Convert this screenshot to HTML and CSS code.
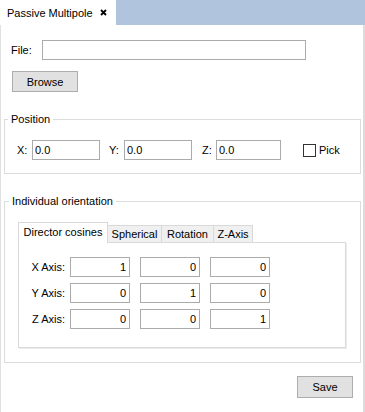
FILE: index.html
```html
<!DOCTYPE html>
<html>
<head>
<meta charset="utf-8">
<link rel="stylesheet" href="styles.css">
</head>
<body>
<div class="window">
  <div class="tabbar">
    <div class="doc-tab">
      <span class="doc-title">Passive Multipole</span>
      <svg class="close" width="7" height="7" viewBox="0 0 7 7"><path d="M1 1L6 6M6 1L1 6" stroke="#000" stroke-width="1.8"/></svg>
    </div>
  </div>
  <div class="panel">
    <div class="file-row">
      <label class="file-label">File:</label>
      <input class="text file-input" type="text" value="">
    </div>
    <button class="btn browse">Browse</button>

    <fieldset class="group pos-group">
      <legend>Position</legend>
      <div class="pos-row">
        <label class="axis">X:</label><input class="text pos" type="text" value="0.0">
        <label class="axis axis-y">Y:</label><input class="text pos" type="text" value="0.0">
        <label class="axis axis-z">Z:</label><input class="text pos pos-z" type="text" value="0.0">
        <input class="check" type="checkbox"><span class="pick">Pick</span>
      </div>
    </fieldset>

    <fieldset class="group orient-group">
      <legend>Individual orientation</legend>
      <div class="tabs">
        <div class="tab active t1">Director cosines</div>
        <div class="tab t2">Spherical</div>
        <div class="tab t3">Rotation</div>
        <div class="tab t4">Z-Axis</div>
      </div>
      <div class="pane">
        <div class="mrow"><span class="mlabel">X Axis:</span><input class="text num" value="1"><input class="text num" value="0"><input class="text num" value="0"></div>
        <div class="mrow"><span class="mlabel">Y Axis:</span><input class="text num" value="0"><input class="text num" value="1"><input class="text num" value="0"></div>
        <div class="mrow"><span class="mlabel">Z Axis:</span><input class="text num" value="0"><input class="text num" value="0"><input class="text num" value="1"></div>
      </div>
    </fieldset>

    <div class="footer">
      <button class="btn save">Save</button>
    </div>
  </div>
</div>
</body>
</html>
```

FILE: styles.css
```css
* { box-sizing: border-box; }
html, body { margin: 0; padding: 0; background: #fff; }
body {
  font-family: "Liberation Sans", Arial, sans-serif;
  font-size: 11px;
  line-height: 14px;
  color: #000;
}
.window {
  width: 365px;
  height: 412px;
  display: flex;
  flex-direction: column;
}
.tabbar {
  height: 25px;
  background: #b0c4de;
  display: flex;
  flex: none;
}
.doc-tab {
  width: 116px;
  height: 25px;
  background: #fff;
  display: flex;
  align-items: center;
  padding-left: 7px;
}
.doc-title { margin-right: 7px; }
.close { display: block; }
.panel {
  flex: 1;
  border-left: 1px solid #e0e0e0;
  border-right: 2px solid #dcdcdc;
  padding: 15px 3px 0 3px;
  display: flex;
  flex-direction: column;
  align-items: flex-start;
}
.file-row {
  display: flex;
  align-items: center;
  margin-left: 7px;
}
.file-label { width: 31px; }
.text {
  font: inherit;
  color: #000;
  height: 20px;
  border: 1px solid #ababab;
  background: #fff;
  padding: 0 2px;
  margin: 0;
  outline: none;
}
.file-input { width: 264px; }
.btn {
  font: inherit;
  color: #000;
  background: #e1e1e1;
  border: 1px solid #adadad;
  padding: 0;
  margin: 0;
}
.browse {
  width: 66px;
  height: 21px;
  margin-top: 11px;
  margin-left: 8px;
}
.group {
  margin: 0;
  border: 1px solid #dcdcdc;
  min-width: 0;
  width: 357px;
}
.group legend {
  padding: 0 3px;
  margin-left: -9px;
  line-height: 14px;
}
.pos-group {
  margin-top: 20px;
  padding: 14px 12px 13px 12px;
}
.pos-row {
  display: flex;
  align-items: center;
}
.axis { width: 15px; flex: none; }
.axis-y { margin-left: 9px; }
.axis-z { margin-left: 10px; width: 14px; }
.pos { width: 68px; flex: none; }
.pos-z { width: 65px; }
.check {
  appearance: none;
  -webkit-appearance: none;
  width: 13px;
  height: 13px;
  border: 1px solid #333;
  background: #fff;
  margin: 0 3px 0 22px;
  flex: none;
}
.orient-group {
  margin-top: 20px;
  padding: 14px 14px 14px 13px;
}
.tabs {
  display: flex;
  align-items: flex-end;
  height: 20px;
}
.tab {
  height: 17px;
  border: 1px solid #d9d9d9;
  border-bottom: none;
  background: #f0f0f0;
  display: flex;
  align-items: center;
  justify-content: center;
  margin-left: -1px;
}
.tab.active {
  height: 21px;
  margin-bottom: -1px;
  margin-left: 0;
  background: #fff;
  position: relative;
  z-index: 1;
  padding-bottom: 2px;
}
.t1 { width: 90px; }
.t2 { width: 55px; }
.t3 { width: 53px; }
.t4 { width: 40px; }
.pane {
  border: 1px solid #d9d9d9;
  box-shadow: 1px 1px 0 #ececec;
  padding: 14px 0 18px 0;
  display: flex;
  flex-direction: column;
  gap: 6px;
}
.mrow {
  display: flex;
  align-items: center;
  gap: 10px;
}
.mlabel {
  width: 46px;
  text-align: right;
  margin-right: -5px;
}
.num {
  width: 60px;
  text-align: right;
  padding-right: 3px;
}
.footer {
  align-self: stretch;
  display: flex;
  justify-content: flex-end;
  padding-right: 7px;
  margin-top: 13px;
}
.save {
  width: 56px;
  height: 22px;
}
```
